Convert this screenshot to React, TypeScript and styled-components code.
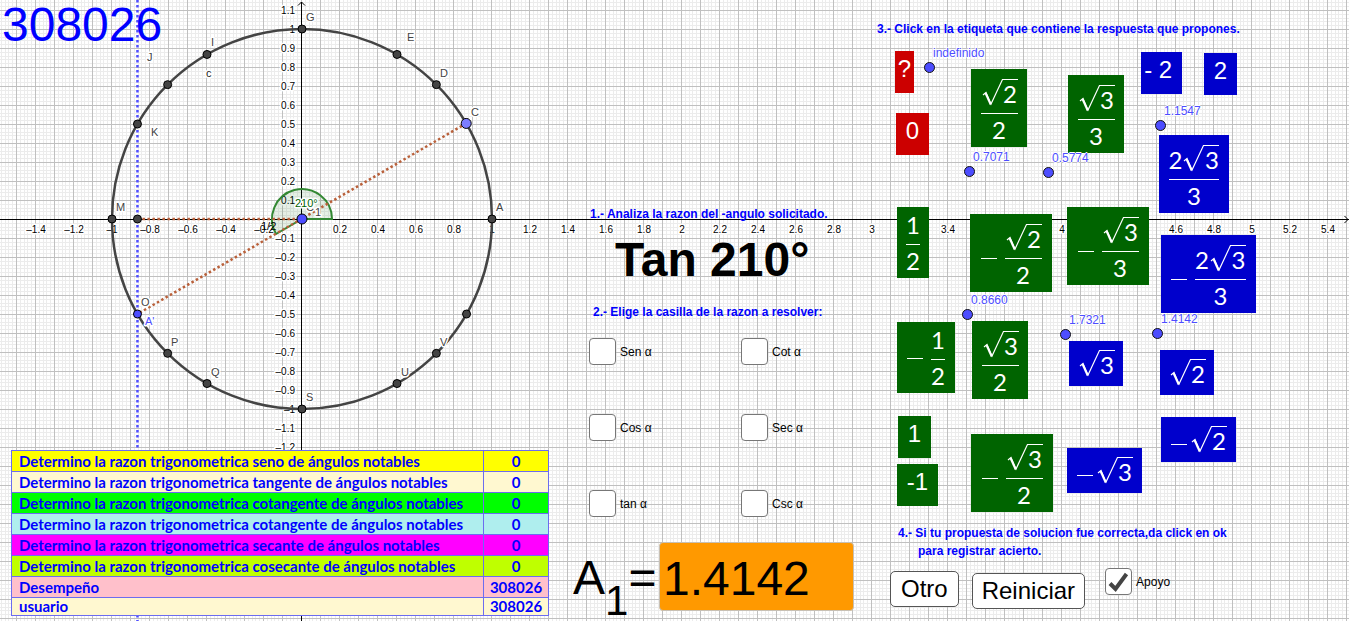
import React, { useState } from "react";
import styled, { createGlobalStyle, css } from "styled-components";

const GlobalStyle = createGlobalStyle`
  * { box-sizing: border-box; }
  body {
    margin: 0;
    background: #fff;
    color: #000;
    font-family: "Liberation Sans", Arial, sans-serif;
    font-size: 12px;
  }
`;

const BLUE = "#0000ff";
const POINT_BLUE = "#4d4dff";

/* ---------- coordinate plane ---------- */

const OX = 302;
const OY = 219;
const UNIT = 190;
/* the axes sit on pixel centres so that their lines stay crisp */
const AXIS_X = 301.5;
const AXIS_Y = 219.5;

const GraphSvg = styled.svg`
  position: absolute;
  top: 0;
  left: 0;
  width: calc(100% - 2px);
  height: calc(100% - 2px);
  overflow: hidden;
  font-family: "Liberation Sans", Arial, sans-serif;
`;

const AxisText = styled.text`
  font-size: 10px;
  fill: #000;
  stroke: #fff;
  stroke-width: 3px;
  stroke-linejoin: round;
  paint-order: stroke;
`;

const PointText = styled.text<{ $color?: string }>`
  font-size: 11px;
  fill: ${(p) => p.$color ?? "#444"};
  stroke: #fff;
  stroke-width: 3px;
  stroke-linejoin: round;
  paint-order: stroke;
`;

const minus = (v: number) => {
  const text = String(Math.round(Math.abs(v) * 10) / 10);
  return v < 0 ? "\u2013" + text : text;
};

/* ticks whose labels would lie behind the answer tiles */
const coveredTicks = [16, 18, 19, 21, 22];
const xTicks: number[] = [];
for (let i = -7; i <= 27; i++) if (i !== 0 && !coveredTicks.includes(i)) xTicks.push(i / 5);
const yTicks: number[] = [];
for (let i = -12; i <= 11; i++) if (i !== 0) yTicks.push(i / 10);

const darkAngles = [0, 45, 60, 90, 120, 135, 150, 180, 225, 240, 270, 300, 315, 330];

const pointNames: { name: string; x: number; y: number; color?: string }[] = [
  { name: "A", x: 496, y: 211 },
  { name: "C", x: 471, y: 116 },
  { name: "D", x: 440, y: 77 },
  { name: "E", x: 407, y: 41 },
  { name: "G", x: 306, y: 21 },
  { name: "I", x: 211, y: 46 },
  { name: "c", x: 206, y: 77, color: "#222" },
  { name: "J", x: 147, y: 61 },
  { name: "K", x: 151, y: 136 },
  { name: "M", x: 116, y: 211 },
  { name: "O", x: 141, y: 306 },
  { name: "A'", x: 145, y: 325, color: POINT_BLUE },
  { name: "P", x: 171, y: 346 },
  { name: "Q", x: 211, y: 376 },
  { name: "S", x: 306, y: 401 },
  { name: "U", x: 401, y: 376 },
  { name: "V", x: 440, y: 346 },
];

const at = (deg: number, r = UNIT) => ({
  x: OX + r * Math.cos((deg * Math.PI) / 180),
  y: OY - r * Math.sin((deg * Math.PI) / 180),
});

const BROWN = "#b9603a";
const DOTS = { strokeWidth: 2.5, strokeDasharray: "2.5 2.5" };

function Graph() {
  const c = at(30.2);
  const o = at(210);
  const arcEnd = at(210, 30);
  return (
    <GraphSvg aria-label="Circunferencia unitaria">
      <defs>
        <pattern id="grid" x="16" y="10" width="19" height="19" patternUnits="userSpaceOnUse">
          <path
            d="M4.5 0V19M8.5 0V19M11.5 0V19M15.5 0V19M0 4.5H19M0 8.5H19M0 11.5H19M0 15.5H19"
            stroke="#ececec"
            strokeWidth="1"
          />
          <path d="M0.5 0V19M0 0.5H19" stroke="#c0c0c0" strokeWidth="1" />
        </pattern>
      </defs>
      <rect width="100%" height="100%" fill="url(#grid)" />

      <line x1="0" x2="100%" y1={AXIS_Y} y2={AXIS_Y} stroke="#000" />
      <line x1={AXIS_X} x2={AXIS_X} y1="2" y2="100%" stroke="#000" />
      <path d="M298 5.5L301.5 2L305 5.5" fill="none" stroke="#000" />
      <svg x="100%" y={AXIS_Y} overflow="visible">
        <path d="M-4.5 -3.5L-1 0L-4.5 3.5" fill="none" stroke="#000" />
      </svg>

      {xTicks.map((v) => (
        <AxisText key={v} x={OX + v * UNIT} y="233" textAnchor="middle">
          {minus(v)}
        </AxisText>
      ))}
      {yTicks.map((v) => (
        <AxisText key={v} x="295" y={AXIS_Y - v * UNIT + 3} textAnchor="end">
          {minus(v)}
        </AxisText>
      ))}

      <circle cx={OX} cy={OY} r={UNIT} fill="none" stroke="#444" strokeWidth="2.5" />
      <path
        d={`M${OX} ${OY}H${OX + 30}A30 30 0 1 0 ${arcEnd.x} ${arcEnd.y}Z`}
        fill="#006400"
        fillOpacity="0.1"
        stroke="#338833"
        strokeWidth="2"
      />
      <line x1={c.x} y1={c.y} x2={o.x} y2={o.y} stroke={BROWN} {...DOTS} />
      <line x1={o.x} y1={OY} x2={OX} y2={OY} stroke={BROWN} {...DOTS} />
      <line x1={o.x} y1="0" x2={o.x} y2="100%" stroke={POINT_BLUE} {...DOTS} />

      <PointText x="306" y="211">C</PointText>
      <PointText x="315" y="216">1</PointText>
      {pointNames.map((p) => (
        <PointText key={p.name} x={p.x} y={p.y} $color={p.color}>
          {p.name}
        </PointText>
      ))}
      <text x="261" y="230" fontSize="11">1/2</text>
      <PointText x="295" y="207" $color="#006400">210°</PointText>

      {darkAngles.map((a) => {
        const p = at(a);
        return <circle key={a} cx={p.x} cy={p.y} r="4" fill="#444" stroke="#000" />;
      })}
      <circle cx={o.x} cy={OY} r="4" fill="#444" stroke="#000" />
      <circle cx={o.x} cy={o.y} r="4" fill={POINT_BLUE} stroke="#000" />
      <circle cx={c.x} cy={c.y} r="5" fill="#7d7dff" stroke="#000" />
      <circle cx={OX} cy={OY} r="5" fill={POINT_BLUE} stroke="#000" />
    </GraphSvg>
  );
}

/* ---------- page layout ---------- */

const Page = styled.main`
  position: relative;
  display: grid;
  grid-template-columns: 568px 302px minmax(480px, 1fr);
  min-height: 100vh;
`;

const Column = styled.section`
  position: relative;
  display: flex;
  flex-direction: column;
`;

const ScoreColumn = styled(Column)`
  justify-content: space-between;
  align-items: flex-start;
  padding: 0 0 7px 11px;
`;

const UserNumber = styled.output`
  margin-left: -9px;
  font-size: 48px;
  line-height: 50px;
  color: ${BLUE};
`;

const ScoreTable = styled.table`
  width: 538px;
  border-collapse: collapse;
  table-layout: fixed;
  color: ${BLUE};
  font-family: Lato, "Noto Sans", sans-serif;
  font-size: 15px;
  font-weight: 700;
  line-height: 17px;
`;

const ScoreRow = styled.tr<{ $bg: string }>`
  height: 21px;
  background: ${(p) => p.$bg};
  &:last-child { height: 18px; }
`;

const ScoreName = styled.th`
  padding: 0 0 0 7px;
  border: 1px solid #6c6cf0;
  text-align: left;
  white-space: nowrap;
`;

const ScoreValue = styled.td`
  width: 65px;
  padding: 0;
  border: 1px solid #6c6cf0;
  text-align: center;
`;

const scores = [
  ["Determino la razon trigonometrica seno de ángulos notables", "0", "#ffff00"],
  ["Determino la razon trigonometrica tangente de ángulos notables", "0", "#fff8d0"],
  ["Determino la razon trigonometrica cotangente de ángulos notables", "0", "#00ff00"],
  ["Determino la razon trigonometrica cotangente de ángulos notables", "0", "#afeeee"],
  ["Determino la razon trigonometrica secante de ángulos notables", "0", "#ff00ff"],
  ["Determino la razon trigonometrica cosecante de ángulos notables", "0", "#bfff00"],
  ["Desempeño", "308026", "#ffc0cb"],
  ["usuario", "308026", "#fff8d0"],
];

/* ---------- exercise ---------- */

const ExerciseColumn = styled(Column)`
  padding: 206px 0 0 5px;
`;

const Step = styled.h2<{ $indent: number }>`
  margin: 0 0 0 ${(p) => p.$indent}px;
  color: ${BLUE};
  font-size: 12px;
  line-height: 16px;
  font-weight: 700;
  white-space: nowrap;
`;

const Question = styled.p`
  margin: 10px 0 16px 42px;
  font-size: 48px;
  line-height: 56px;
  font-weight: 700;
`;

const Choices = styled.div`
  display: grid;
  grid-template-columns: 152px 120px;
  row-gap: 49px;
  padding: 18px 0 0 16px;
`;

const CheckLabel = styled.label`
  display: flex;
  align-items: center;
  gap: 4px;
  height: 27px;
  white-space: nowrap;
`;

const CheckBox = styled.input`
  appearance: none;
  width: 27px;
  height: 27px;
  margin: 0;
  border: 1px solid #777;
  border-radius: 4px;
  background: #fff;
`;

const CheckWrap = styled.span`
  position: relative;
  display: flex;
`;

const CheckMark = styled.svg`
  position: absolute;
  inset: 0;
  pointer-events: none;
`;

interface CheckProps {
  label: string;
  checked: boolean;
  onToggle: () => void;
}

function Check({ label, checked, onToggle }: CheckProps) {
  return (
    <CheckLabel>
      <CheckWrap>
        <CheckBox type="checkbox" checked={checked} onChange={onToggle} />
        {checked && (
          <CheckMark width="27" height="27" viewBox="0 0 27 27" aria-hidden="true">
            <path d="M5 15.5L10.5 21L21.500 6" fill="none" stroke="#444" strokeWidth="4" />
          </CheckMark>
        )}
      </CheckWrap>
      {label}
    </CheckLabel>
  );
}

const AnswerRow = styled.div`
  display: flex;
  align-items: center;
  margin-top: 25px;
`;

const AnswerLabel = styled.label`
  width: 86px;
  flex: none;
  padding-top: 2px;
  font-size: 48px;
  line-height: 56px;
  white-space: nowrap;
`;

const Subscript = styled.sub`
  position: relative;
  top: 21px;
  font-size: 42px;
  line-height: 0;
  vertical-align: baseline;
`;

const AnswerInput = styled.input`
  width: 195px;
  height: 69px;
  padding: 4px 3px 0;
  border: 1px solid #c8c0b4;
  border-radius: 4px;
  background: #ff9900;
  color: #000;
  font: 48px "Liberation Sans", Arial, sans-serif;
`;

/* ---------- answer board ---------- */

const BoardColumn = styled(Column)`
  padding-top: 21px;
`;

const Board = styled.div`
  position: relative;
  height: 487px;
`;

const tones = { red: "#cc0000", green: "#006400", blue: "#0000cc" };
type Tone = keyof typeof tones;

const Tile = styled.button<{
  $tone: Tone;
  $x: number;
  $y: number;
  $w: number;
  $h: number;
  $plain: boolean;
  $gap: number;
}>`
  position: absolute;
  left: ${(p) => p.$x}px;
  top: ${(p) => p.$y}px;
  width: ${(p) => p.$w}px;
  height: ${(p) => p.$h}px;
  display: flex;
  align-items: center;
  justify-content: center;
  gap: ${(p) => p.$gap}px;
  padding: 0;
  border: 0;
  background: ${(p) => tones[p.$tone]};
  color: #fff;
  font-family: Lato, "Noto Sans", sans-serif;
  font-size: 24px;
  line-height: 24px;
  white-space: pre;
  ${(p) =>
    p.$plain &&
    css`
      padding-bottom: 6px;
      font-family: "Liberation Sans", Arial, sans-serif;
    `}
`;

const Minus = styled.span<{ $drop: number }>`
  width: 16px;
  height: 1px;
  margin-top: ${(p) => p.$drop}px;
  background: #fff;
`;

const Frac = styled.span`
  display: flex;
  flex-direction: column;
  align-items: center;
`;

const Numerator = styled.span<{ $tall: boolean }>`
  display: flex;
  align-items: flex-end;
  justify-content: center;
  min-width: 14px;
  padding-top: ${(p) => (p.$tall ? 5 : 0)}px;
  padding-bottom: 7px;
  border-bottom: 1px solid #fff;
`;

const Denominator = styled.span`
  padding-top: 4px;
`;

const Root = styled.span`
  display: flex;
  align-items: flex-start;
`;

const Radicand = styled.span`
  width: 15px;
  padding-top: 2px;
  border-top: 1px solid #fff;
  text-align: center;
`;

function Sqrt({ n }: { n: string }) {
  return (
    <Root>
      <svg width="22" height="27" viewBox="0 0 22 27" aria-hidden="true">
        <path d="M2 16L5 13.5L10 25L21.500 0.500H22" fill="none" stroke="#fff" strokeWidth="1.2" />
        <path d="M4.5 14L9.700 25.500" fill="none" stroke="#fff" strokeWidth="2" />
      </svg>
      <Radicand>{n}</Radicand>
    </Root>
  );
}

interface Expr {
  neg?: boolean;
  num?: string;
  root?: string;
  den?: string;
}

function MathExpr({ neg, num, root, den }: Expr) {
  const top = (
    <>
      {num}
      {root && <Sqrt n={root} />}
    </>
  );
  return (
    <>
      {neg && <Minus $drop={root ? 10 : 2} />}
      {den ? (
        <Frac>
          <Numerator $tall={!!root}>{top}</Numerator>
          <Denominator>{den}</Denominator>
        </Frac>
      ) : (
        top
      )}
    </>
  );
}

interface TileSpec extends Expr {
  tone: Tone;
  box: [number, number, number, number];
}

const tiles: TileSpec[] = [
  { tone: "red", box: [25, 14, 19, 42], num: "?" },
  { tone: "red", box: [26, 76, 33, 42], num: "0" },
  { tone: "green", box: [101, 32, 56, 78], root: "2", den: "2" },
  { tone: "green", box: [198, 38, 56, 78], root: "3", den: "3" },
  { tone: "blue", box: [271, 15, 41, 42], num: "- 2 " },
  { tone: "blue", box: [334, 16, 33, 42], num: "2" },
  { tone: "blue", box: [289, 98, 70, 78], num: "2", root: "3", den: "3" },
  { tone: "green", box: [27, 170, 32, 71], num: "1", den: "2" },
  { tone: "green", box: [100, 177, 82, 78], neg: true, root: "2", den: "2" },
  { tone: "green", box: [197, 170, 82, 78], neg: true, root: "3", den: "3" },
  { tone: "blue", box: [291, 198, 95, 78], neg: true, num: "2", root: "3", den: "3" },
  { tone: "green", box: [27, 285, 58, 71], neg: true, num: "1", den: "2" },
  { tone: "green", box: [102, 284, 56, 78], root: "3", den: "2" },
  { tone: "blue", box: [199, 304, 54, 45], root: "3" },
  { tone: "blue", box: [290, 313, 54, 45], root: "2" },
  { tone: "blue", box: [291, 380, 75, 45], neg: true, root: "2" },
  { tone: "blue", box: [197, 411, 75, 45], neg: true, root: "3" },
  { tone: "green", box: [28, 379, 33, 42], num: "1" },
  { tone: "green", box: [27, 427, 41, 42], num: "-1" },
  { tone: "green", box: [101, 397, 82, 78], neg: true, root: "3", den: "2" },
];

const Pin = styled.span<{ $x: number; $y: number }>`
  position: absolute;
  left: ${(p) => p.$x - 5}px;
  top: ${(p) => p.$y - 5}px;
  width: 11px;
  height: 11px;
  border: 1px solid #111;
  border-radius: 50%;
  background: ${POINT_BLUE};
`;

const PinText = styled.span`
  position: absolute;
  left: 8px;
  bottom: 12px;
  color: ${POINT_BLUE};
  font-size: 12px;
  line-height: 14px;
  text-shadow: 1px 0 #fff, -1px 0 #fff, 0 1px #fff, 0 -1px #fff;
`;

const pins: [string, number, number][] = [
  ["indefinido", 59, 30],
  ["0.7071", 99, 134],
  ["0.5774", 178, 135],
  ["1.1547", 290, 88],
  ["0.8660", 97, 277],
  ["1.7321", 195, 297],
  ["1.4142", 287, 296],
];

const StepLines = styled(Step)`
  line-height: 18px;
  white-space: pre;
`;

const StepSecondLine = styled.span`
  display: block;
  padding-left: 20px;
`;

const Actions = styled.div`
  display: flex;
  align-items: center;
  height: 41px;
  margin: 8px 0 0 20px;
`;

const ActionButton = styled.button<{ $low?: boolean }>`
  height: 36px;
  margin-right: ${(p) => (p.$low ? 20 : 13)}px;
  padding: 0 ${(p) => (p.$low ? 9 : 10)}px;
  align-self: ${(p) => (p.$low ? "flex-end" : "center")};
  border: 1px solid #555;
  border-radius: 5px;
  background: #fff;
  color: #000;
  font: 24px "Liberation Sans", Arial, sans-serif;
`;

const SupportSlot = styled.div`
  align-self: flex-start;
`;

const ratios = ["Sen α", "Cot α", "Cos α", "Sec α", "tan α", "Csc α"];

export default function App() {
  const [picked, setPicked] = useState("");
  const [support, setSupport] = useState(true);
  const [answer, setAnswer] = useState("1.4142");

  return (
    <>
      <GlobalStyle />
      <Page>
        <Graph />

        <ScoreColumn>
          <UserNumber>308026</UserNumber>
          <ScoreTable>
            <tbody>
              {scores.map(([name, value, bg], i) => (
                <ScoreRow key={i} $bg={bg}>
                  <ScoreName scope="row">{name}</ScoreName>
                  <ScoreValue>{value}</ScoreValue>
                </ScoreRow>
              ))}
            </tbody>
          </ScoreTable>
        </ScoreColumn>

        <ExerciseColumn>
          <Step $indent={17}>1.- Analiza la razon del -angulo solicitado.</Step>
          <Question>Tan 210°</Question>
          <Step $indent={20}>2.- Elige la casilla de la razon a resolver:</Step>
          <Choices>
            {ratios.map((r) => (
              <Check
                key={r}
                label={r}
                checked={picked === r}
                onToggle={() => setPicked(picked === r ? "" : r)}
              />
            ))}
          </Choices>
          <AnswerRow>
            <AnswerLabel htmlFor="answer">
              A<Subscript>1</Subscript>=
            </AnswerLabel>
            <AnswerInput id="answer" value={answer} onChange={(e) => setAnswer(e.target.value)} />
          </AnswerRow>
        </ExerciseColumn>

        <BoardColumn>
          <Step $indent={7}>3.- Click en la etiqueta que contiene la respuesta que propones.</Step>
          <Board>
            {tiles.map(({ tone, box, ...expr }, i) => (
              <Tile
                key={i}
                type="button"
                $tone={tone}
                $x={box[0]}
                $y={box[1]}
                $w={box[2]}
                $h={box[3]}
                $plain={!expr.root && !expr.den}
                $gap={expr.den ? 8 : 3}
              >
                <MathExpr {...expr} />
              </Tile>
            ))}
            {pins.map(([text, x, y]) => (
              <Pin key={text} $x={x} $y={y}>
                <PinText>{text}</PinText>
              </Pin>
            ))}
          </Board>
          <StepLines $indent={28}>
            4.- Si tu propuesta de solucion fue correcta,da click en ok
            <StepSecondLine>para registrar acierto.</StepSecondLine>
          </StepLines>
          <Actions>
            <ActionButton type="button">Otro</ActionButton>
            <ActionButton type="button" $low>
              Reiniciar
            </ActionButton>
            <SupportSlot>
              <Check label="Apoyo" checked={support} onToggle={() => setSupport(!support)} />
            </SupportSlot>
          </Actions>
        </BoardColumn>
      </Page>
    </>
  );
}
